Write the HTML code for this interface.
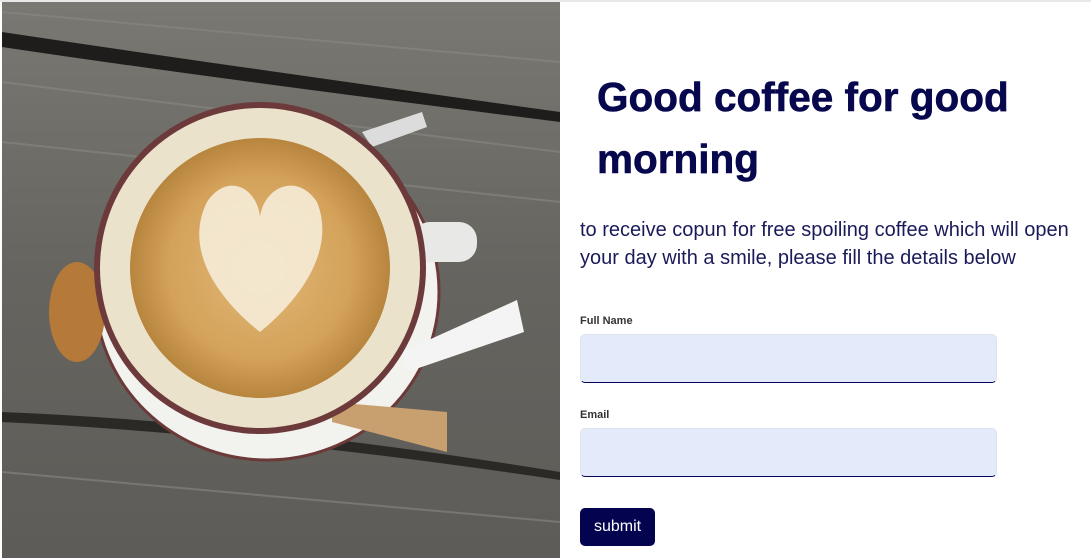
<!DOCTYPE html>
<html><head><style>
body{margin:0;width:1091px;height:558px;overflow:hidden;background:#fff;font-family:"Liberation Sans",sans-serif;position:relative}
.top{position:absolute;left:0;top:0;width:1091px;height:2px;background:#e8e8e8}
svg.photo{position:absolute;left:2px;top:2px}
h1{position:absolute;left:597px;top:66px;margin:0;font-size:40.5px;line-height:62px;font-weight:bold;color:#07074d;width:480px;-webkit-text-stroke:0.6px #07074d}
p{position:absolute;left:580px;top:216px;margin:0;font-size:20px;line-height:28px;color:#1a1a5a;width:510px}
label{position:absolute;left:580px;font-size:11px;font-weight:bold;color:#333}
.in{position:absolute;left:580px;width:417px;height:49px;background:#e3ebfb;border-radius:5px;border:1px solid #dde3ee;border-bottom:1.5px solid #05055a;box-sizing:border-box}
.btn{position:absolute;left:580px;top:508px;width:75px;height:38px;background:#03034f;border-radius:5px;color:#fff;font-size:16px;text-align:center;line-height:38px}
</style></head><body>
<div class="top"></div>
<svg class="photo" width="558" height="556" viewBox="0 0 558 556">
<defs>
<radialGradient id="cf" cx="0.5" cy="0.5" r="0.5"><stop offset="0" stop-color="#e0b878"/><stop offset="0.7" stop-color="#d4a25a"/><stop offset="1" stop-color="#b8853e"/></radialGradient>
<linearGradient id="wd" x1="0" y1="0" x2="0" y2="1"><stop offset="0" stop-color="#7a7872"/><stop offset="0.5" stop-color="#66645f"/><stop offset="1" stop-color="#5e5c58"/></linearGradient>
</defs>
<rect width="558" height="556" fill="url(#wd)"/>
<path d="M0 30 Q200 60 558 110 L558 120 Q200 75 0 45Z" fill="#1e1d1b"/>
<path d="M0 410 Q250 420 558 470 L558 478 Q250 432 0 420Z" fill="#2a2926"/>
<g stroke="#8a8882" stroke-width="2" opacity="0.6">
<line x1="0" y1="80" x2="558" y2="150"/><line x1="0" y1="140" x2="558" y2="200"/><line x1="0" y1="470" x2="558" y2="520"/><line x1="0" y1="10" x2="558" y2="60"/>
</g>
<ellipse cx="265" cy="290" rx="172" ry="168" fill="#f2f2ef" stroke="#6b3a38" stroke-width="3"/>
<path d="M360 130 L420 110 L425 125 L370 145Z" fill="#dcdcdc"/>
<path d="M400 350 L515 298 L522 330 L405 370Z" fill="#f4f4f4"/>
<path d="M330 400 L445 410 L445 450 L330 420Z" fill="#c8a070"/>
<rect x="410" y="220" width="65" height="40" rx="18" fill="#e8e8e6"/>
<ellipse cx="75" cy="310" rx="28" ry="50" fill="#b57a3a"/>
<circle cx="258" cy="266" r="166" fill="#6d3a3c"/>
<circle cx="258" cy="266" r="160" fill="#ebe2cc"/>
<circle cx="258" cy="266" r="130" fill="url(#cf)"/>
<path d="M258 330 C220 300 180 250 205 200 C225 170 255 185 258 215 C262 185 295 170 315 200 C335 250 295 300 258 330Z" fill="#f5ecd8" opacity="0.9"/>
</svg>
<h1>Good coffee for good morning</h1>
<p>to receive copun for free spoiling coffee which will open your day with a smile, please fill the details below</p>
<label style="top:315px">Full Name</label>
<div class="in" style="top:334px"></div>
<label style="top:409px">Email</label>
<div class="in" style="top:428px"></div>
<div class="btn">submit</div>
</body></html>
